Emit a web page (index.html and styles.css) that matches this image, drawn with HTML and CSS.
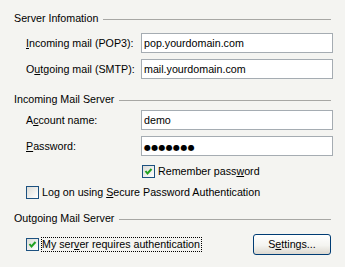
FILE: index.html
```html
<!DOCTYPE html>
<html lang="en">
<head>
    <meta charset="UTF-8">
    <title>Account Properties - Servers</title>
    <link rel="stylesheet" href="styles.css">
</head>
<body>
    <div class="dialog">
        <div class="group-title">Server Infomation</div>
        <div class="field-grid">
            <label class="field-label"><u>I</u>ncoming mail (POP3):</label>
            <div class="text-box">pop.yourdomain.com</div>
            <label class="field-label">O<u>u</u>tgoing mail (SMTP):</label>
            <div class="text-box">mail.yourdomain.com</div>
        </div>

        <div class="group-title incoming">Incoming Mail Server</div>
        <div class="field-grid incoming-fields">
            <label class="field-label">A<u>c</u>count name:</label>
            <div class="text-box">demo</div>
            <label class="field-label"><u>P</u>assword:</label>
            <div class="text-box"><span class="dots">●●●●●●●</span></div>
        </div>
        <div class="check-row remember">
            <span class="checkbox checked">
                <svg width="11" height="11" viewBox="0 0 11 11"><polyline points="2.5,5 4.5,7.5 8.5,3" fill="none" stroke="#21a121" stroke-width="2"/></svg>
            </span>
            <span>Remember pass<u>w</u>ord</span>
        </div>
        <div class="check-row logon">
            <span class="checkbox"></span>
            <span>Log on using <u>S</u>ecure Password Authentication</span>
        </div>

        <div class="group-title outgoing">Outgoing Mail Server</div>
        <div class="auth-row">
            <div class="check-row">
                <span class="checkbox checked">
                    <svg width="11" height="11" viewBox="0 0 11 11"><polyline points="2.5,5 4.5,7.5 8.5,3" fill="none" stroke="#21a121" stroke-width="2"/></svg>
                </span>
                <span class="focus-label">My ser<u>v</u>er requires authentication</span>
            </div>
            <div class="button">S<u>e</u>ttings...</div>
        </div>
    </div>
</body>
</html>
```

FILE: styles.css
```css
body {
    margin: 0;
    background-color: #f4f4f1;
    font-family: "Liberation Sans", Arial, sans-serif;
    font-size: 10.7px;
    color: #000;
}

.dialog {
    padding: 12px 14px 0 14px;
}

.group-title {
    display: flex;
    align-items: center;
    height: 13px;
    line-height: 13px;
    white-space: nowrap;
}

.group-title::after {
    content: "";
    flex: 1;
    border-top: 1px solid #a7a7a4;
    margin-left: 5px;
    margin-top: 1px;
}

.group-title.incoming {
    margin-top: 14px;
}

.group-title.outgoing {
    margin-top: 13px;
}

.field-grid {
    display: grid;
    grid-template-columns: 115px 1fr;
    row-gap: 6px;
    padding-left: 12px;
    margin-top: 8px;
    margin-right: -2px;
}

.field-grid.incoming-fields {
    margin-top: 4px;
}

.field-label {
    line-height: 20px;
}

.text-box {
    height: 20px;
    box-sizing: border-box;
    border: 1px solid #a5acb2;
    background-color: #fff;
    padding: 0 2px;
    line-height: 18px;
}

.dots {
    font-family: "DejaVu Sans", sans-serif;
    font-size: 8px;
    letter-spacing: 0.3px;
}

.check-row {
    display: flex;
    align-items: center;
    height: 13px;
    line-height: 13px;
    white-space: nowrap;
}

.check-row.remember {
    margin-top: 9px;
    padding-left: 128px;
}

.check-row.logon {
    margin-top: 8px;
    padding-left: 12px;
}

.checkbox {
    width: 13px;
    height: 13px;
    box-sizing: border-box;
    border: 1px solid #1c5180;
    background: linear-gradient(135deg, #dcdcd7, #fff);
    margin-right: 3px;
    display: flex;
    flex-shrink: 0;
}

.auth-row {
    display: flex;
    align-items: center;
    justify-content: space-between;
    height: 21px;
    margin-top: 9px;
    padding-left: 12px;
}

.auth-row .checkbox {
    margin-right: 2px;
}

.focus-label {
    border: 1px dotted #000;
    padding: 0 1px 0 0;
    line-height: 13px;
}

.button {
    width: 78px;
    height: 21px;
    box-sizing: border-box;
    border: 1px solid #003c74;
    border-radius: 3px;
    background: linear-gradient(#fff, #f4f4f0 55%, #dcd8d0);
    text-align: center;
    line-height: 19px;
}
```
